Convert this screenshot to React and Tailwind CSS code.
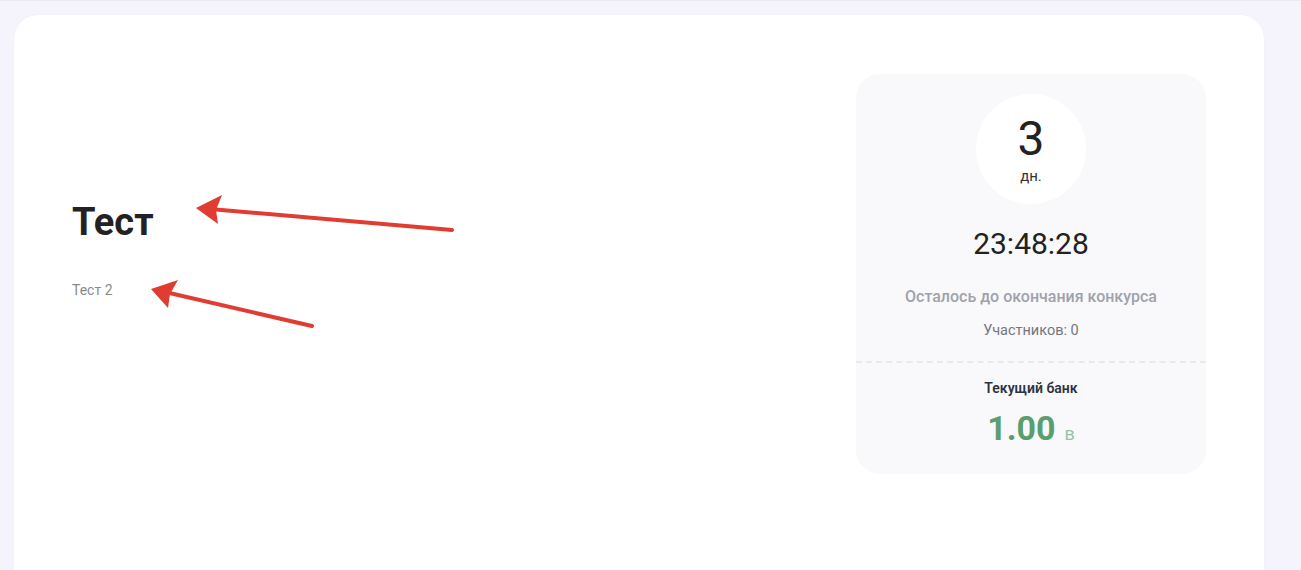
const Arrows = () => (
  <svg className="absolute inset-0 pointer-events-none" width="1301" height="570">
    <g stroke="#e03c31" strokeWidth="4" strokeLinecap="round" fill="#e03c31">
      <line x1="452" y1="229" x2="210" y2="208" />
      <polygon points="196,207 222,194 216,209 218,223" stroke="none" />
      <line x1="312" y1="325" x2="165" y2="291" />
      <polygon points="151,288 178,279 170,293 168,307" stroke="none" />
    </g>
  </svg>
);

export default function App() {
  return (
    <div
      className="relative h-[570px] bg-[#f5f4fc] border-t border-[#ebebf0] pt-[14px] pl-[14px] pr-[37px] overflow-hidden"
      style={{ fontFamily: "Roboto, 'Liberation Sans', sans-serif" }}
    >
      {/* CARD */}
      <div className="bg-white rounded-t-[24px] h-[555px] flex justify-between px-[58px] pt-[59px] shadow-[0_0_2px_rgba(0,0,0,0.04)]">
        {/* LEFT */}
        <div className="pt-[129px]">
          <h1 className="text-[38px] font-bold text-[#222] leading-none">Тест</h1>
          <p className="mt-[39px] text-[14px] text-[#8a8a8a]">Тест 2</p>
        </div>

        {/* TIMER PANEL */}
        <div className="w-[350px] h-[400px] bg-[#f9f9fb] rounded-[24px] flex flex-col items-center pt-[20px]">
          <div className="w-[110px] h-[110px] rounded-full bg-white flex flex-col items-center justify-center">
            <span className="text-[48px] leading-none text-[#222] mt-[4px]">3</span>
            <span className="text-[15px] text-[#333] mt-[2px]">дн.</span>
          </div>
          <div className="mt-[25px] text-[30px] text-[#222] leading-none">23:48:28</div>
          <div className="mt-[26px] text-[16px] font-medium text-[#a0a2aa]">Осталось до окончания конкурса</div>
          <div className="mt-[11px] text-[14.5px] text-[#74777e]">Участников: 0</div>

          <div className="w-full border-t-2 border-dashed border-[#e8e9ec] mt-[19px]" />

          <div className="mt-[15px] text-[14px] font-semibold text-[#2d3340]">Текущий банк</div>
          <div className="mt-[12px] flex items-baseline gap-[9px]">
            <span className="text-[34px] font-bold text-[#5a9e6f] leading-none">1.00</span>
            <span className="text-[18px] text-[#93c6a2]">в</span>
          </div>
        </div>
      </div>

      <Arrows />
    </div>
  );
}
